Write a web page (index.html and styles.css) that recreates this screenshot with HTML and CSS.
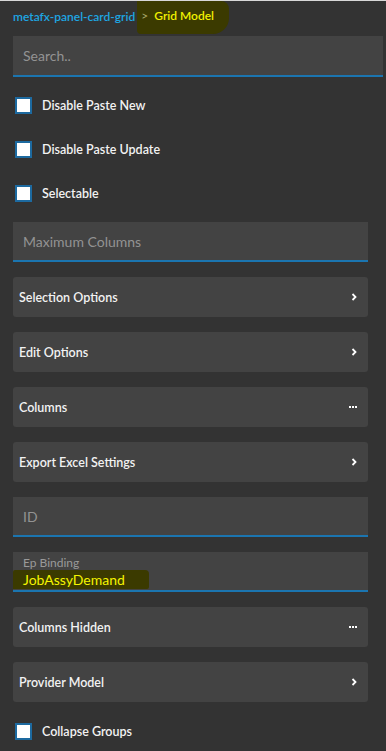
FILE: index.html
```html
<!DOCTYPE html>
<html lang="en">
<head>
  <meta charset="UTF-8" />
  <meta name="viewport" content="width=device-width, initial-scale=1.0" />
  <title>Grid Model – Properties</title>
  <link rel="stylesheet" href="styles.css">
</head>
<body>

<nav class="crumbs">
  <span class="crumb-link">metafx-panel-card-grid</span>
  <span class="crumb-mark">
    <span class="crumb-sep">&gt;</span>
    <span class="crumb-current">Grid Model</span>
  </span>
</nav>

<div class="search"><input type="text" placeholder="Search.."></div>

<main class="props">
  <label class="check"><span class="box"></span>Disable Paste New</label>
  <label class="check"><span class="box"></span>Disable Paste Update</label>
  <label class="check"><span class="box"></span>Selectable</label>

  <div class="field first"><input type="text" placeholder="Maximum Columns"></div>

  <div class="card">Selection Options
    <svg class="ico" width="6" height="8" viewBox="0 0 6 8"><polyline points="1.5,1 4.5,4 1.5,7"/></svg></div>
  <div class="card">Edit Options
    <svg class="ico" width="6" height="8" viewBox="0 0 6 8"><polyline points="1.5,1 4.5,4 1.5,7"/></svg></div>
  <div class="card">Columns
    <svg class="dots" width="8" height="4" viewBox="0 0 8 4"><rect x="0" y="1" width="2" height="2"/><rect x="3" y="1" width="2" height="2"/><rect x="6" y="1" width="2" height="2"/></svg></div>
  <div class="card">Export Excel Settings
    <svg class="ico" width="6" height="8" viewBox="0 0 6 8"><polyline points="1.5,1 4.5,4 1.5,7"/></svg></div>

  <div class="field"><input type="text" placeholder="ID"></div>

  <div class="field filled">
    <span class="field-label">Ep Binding</span>
    <span class="field-value"><span class="hl">JobAssyDemand</span></span>
  </div>

  <div class="card">Columns Hidden
    <svg class="dots" width="8" height="4" viewBox="0 0 8 4"><rect x="0" y="1" width="2" height="2"/><rect x="3" y="1" width="2" height="2"/><rect x="6" y="1" width="2" height="2"/></svg></div>
  <div class="card">Provider Model
    <svg class="ico" width="6" height="8" viewBox="0 0 6 8"><polyline points="1.5,1 4.5,4 1.5,7"/></svg></div>

  <label class="check"><span class="box"></span>Collapse Groups</label>
</main>

</body>
</html>
```

FILE: styles.css
```css
:root   { --bg:#333333; --panel:#434343; --line:#1b75b0; --hl:#3b3a00; }
*       { box-sizing:border-box; margin:0; padding:0; }
body    { font-family:Lato,'Open Sans',sans-serif; background:var(--bg); color:#f2f2f2;
          border-top:1px solid #d8d8d8; }

/* breadcrumb */
.crumbs       { display:flex; align-items:flex-start; height:31px; padding-left:13px; font-size:12px; font-weight:600; }
.crumb-link   { color:#1ea6e2; margin-top:8px; }
.crumb-mark   { display:flex; gap:6px; align-items:center; margin-left:2px; padding:7px 15px 11px 4px;
                background:var(--hl); border-radius:0 8px 16px 4px; }
.crumb-sep    { color:#a9a86a; font-weight:400; }
.crumb-current{ color:#f1f100; }

/* inputs */
input         { width:100%; height:100%; border:none; outline:none; background:none;
                font:inherit; font-size:14px; color:#ddd; padding:0 10px; }
input::placeholder { color:#939393; }
.search       { height:41px; margin:4px 3px 0 13px; background:var(--panel);
                border-bottom:2px solid var(--line); }

.props        { display:flex; flex-direction:column; padding:0 18px 0 13px; }
.field        { height:40px; background:var(--panel); border-bottom:2px solid var(--line); margin-top:15px; }
.field.first  { margin-top:7px; }
.filled       { display:flex; flex-direction:column; padding:3px 0 0 10px; }
.field-label  { font-size:12px; color:#9a9a9a; line-height:15px; }
.field-value  { font-size:14px; color:#f4f400; line-height:19px; margin-left:-10px; }
.hl           { background:var(--hl); padding:0 24px 0 10px; display:inline-block;
                border-radius:2px 4px 2px 0; }

/* checkboxes */
.check        { display:flex; align-items:center; gap:10px; height:44px; padding-left:2px;
                font-size:12.5px; font-weight:600; }
.check:first-child { margin-top:6px; }
.check:last-child  { margin-top:7px; }
.box          { width:17px; height:17px; background:#fff; border:2px solid #1d6aa0; }

/* cards */
.card         { display:flex; justify-content:space-between; align-items:center; height:40px;
                margin-top:15px; padding:0 11px 0 6px; background:var(--panel); border-radius:3px;
                font-size:12.5px; font-weight:600; }
.ico          { fill:none; stroke:#fff; stroke-width:1.8; }
.dots         { fill:#fff; }
```
